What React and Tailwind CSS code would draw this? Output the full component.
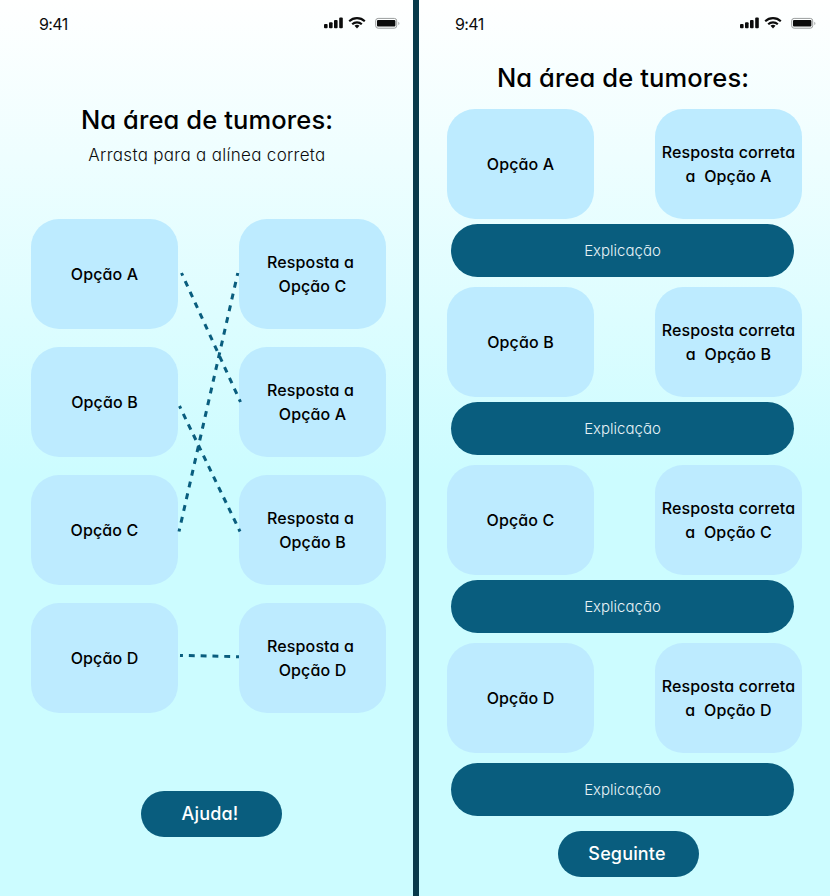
const connectors = [
  { x1: 181.5, y1: 273, x2: 240.5, y2: 402, periods: 12 },
  { x1: 179.5, y1: 406, x2: 240, y2: 531.5, periods: 12 },
  { x1: 179, y1: 531.5, x2: 237.8, y2: 273, periods: 22 },
  { x1: 180, y1: 655.4, x2: 239, y2: 656.7, periods: 5 },
];

const pairs = [
  ["A", "C"],
  ["B", "A"],
  ["C", "B"],
  ["D", "D"],
];

function StatusBar() {
  return (
    <div className="flex h-[46px] items-start justify-between pl-[39px] pr-[13px]">
      <span className="mt-[12px] text-[16px] leading-6 tracking-[-0.6px] text-[#0c0c0c]">9:41</span>
      <svg className="mt-[14px]" width="78" height="18" viewBox="0 0 78 18" fill="#0c0c0c">
        <rect x="2" y="10" width="3.6" height="4.2" rx="1" />
        <rect x="7" y="8.2" width="3.6" height="6" rx="1" />
        <rect x="12" y="6" width="3.6" height="8.2" rx="1" />
        <rect x="17.2" y="3.6" width="3.6" height="10.6" rx="1" />
        <g fill="none" stroke="#0c0c0c" strokeWidth="2.1">
          <path d="M27.2 7.2a11.3 11.3 0 0 1 15.6 0" />
          <path d="M30.2 10.3a7 7 0 0 1 9.6 0" />
        </g>
        <path d="M32.5 11.8a3.7 3.7 0 0 1 5 0L35 14.4z" />
        <rect x="53.7" y="4.4" width="21" height="9.8" rx="2.4" fill="none" stroke="#9a9d9d" strokeWidth="1" />
        <rect x="55" y="6" width="18.4" height="6.6" rx="1" />
        <path d="M76.3 7.7v3.4c1.5-.6 1.5-2.8 0-3.4z" fill="#a5a8a8" />
      </svg>
    </div>
  );
}

function Title({ children }) {
  return (
    <h1 className="text-center text-[25.5px] leading-[38px] font-medium tracking-[0.12px] whitespace-nowrap text-black">
      {children}
    </h1>
  );
}

function Card({ children }) {
  return (
    <div className="flex h-[110px] w-[147px] flex-col items-center justify-center rounded-[28px] bg-[#bdebff] text-[16px] leading-6 font-medium tracking-[0.12px] whitespace-pre text-black">
      {children}
    </div>
  );
}

function Button({ children }) {
  return (
    <button className="h-[46px] w-[141px] rounded-full bg-[#095d7e] pr-[3px] pb-px text-[18px] leading-[27px] font-medium tracking-[0.15px] text-white">
      {children}
    </button>
  );
}

function Explanation() {
  return (
    <div className="ml-1 flex h-[53px] w-[343px] items-center justify-center rounded-[27px] bg-[#095d7e] text-[15px] leading-6 font-light text-[#e6f3f7]">
      <span>Explicação</span>
    </div>
  );
}

export default function App() {
  return (
    <main className="relative flex h-[896px] w-[830px] overflow-hidden bg-[linear-gradient(180deg,#ffffff_0%,#ccfcff_53%,#ccfcff_100%)] font-['Inter','Liberation_Sans',sans-serif] [font-feature-settings:'cv11']">
      <section className="w-[413px] shrink-0">
        <StatusBar />
        <div className="mt-[55px] pl-px">
          <Title>Na área de tumores:</Title>
        </div>
        <p className="mt-[4px] pl-px text-center text-[17px] leading-6 font-light tracking-[0.3px] text-[#0c0c0c]">
          Arrasta para a alínea correta
        </p>
        <div className="mt-[52px] grid grid-cols-[147px_147px] gap-x-[61px] gap-y-[18px] pl-[31px]">
          {pairs.map(([option, answer]) => (
            <div key={option} className="contents">
              <Card>
                <span>Opção {option}</span>
              </Card>
              <Card>
                <span className="pr-1">Resposta a</span>
                <span>Opção {answer}</span>
              </Card>
            </div>
          ))}
        </div>
        <div className="mt-[78px] pl-[141px]">
          <Button>Ajuda!</Button>
        </div>
      </section>
      <div className="w-[6px] shrink-0 bg-[#083a4b]" />
      <section className="w-[411px] shrink-0">
        <div className="-ml-[3px] w-[413px]">
          <StatusBar />
        </div>
        <div className="mt-[13px] pl-[4px] pr-[7px]">
          <div className="pl-px pr-px">
            <Title>Na área de tumores:</Title>
          </div>
        </div>
        <div className="mt-[12px] flex flex-col gap-[10px] pl-[28px]">
          {["A", "B", "C", "D"].map((option) => (
            <div key={option} className="flex flex-col gap-[5px] last:gap-[10px]">
              <div className="flex gap-[61px]">
                <Card>
                  <span>Opção {option}</span>
                </Card>
                <Card>
                  <span>Resposta correta</span>
                  <span>{"a  Opção " + option}</span>
                </Card>
              </div>
              <Explanation />
            </div>
          ))}
        </div>
        <div className="mt-[15px] pl-[139px]">
          <Button>Seguinte</Button>
        </div>
      </section>
      <svg className="pointer-events-none absolute inset-0" width="413" height="896" viewBox="0 0 413 896" stroke="#095d7e" strokeWidth="3">
        {connectors.map(({ periods, ...line }) => (
          <line key={line.y1} {...line} pathLength={periods} strokeDasharray="0.5 0.5" strokeDashoffset="0.25" />
        ))}
      </svg>
    </main>
  );
}
